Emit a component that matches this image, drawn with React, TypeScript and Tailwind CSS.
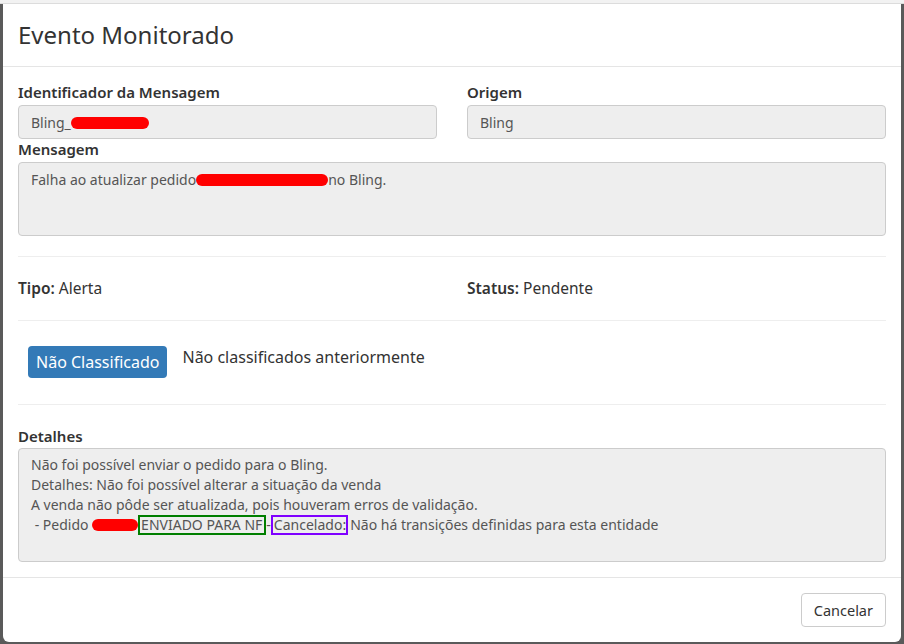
export default function App() {
  return (
    <div
      className="w-[904px] h-[644px] overflow-hidden bg-[#5a5a5a] flex flex-col text-[#333] text-[14px] leading-5"
      style={{ fontFamily: '"Noto Sans", "Open Sans", sans-serif' }}
    >
      <div className="h-[4px] shrink-0 bg-[#f2f2f2] border-b border-[#dcdcdc]" />
      <div className="flex-1 flex pl-[3px] pr-[3px] pb-[2px]">
        <div className="flex-1 bg-white rounded-b-[6px] flex flex-col">
          {/* header */}
          <div className="px-[15px] pt-[14px] pb-[14px] border-b border-[#e5e5e5]">
            <h4 className="text-[24px] leading-[34px] font-normal">Evento Monitorado</h4>
          </div>

          {/* body */}
          <div className="px-[15px] pt-[15px] pb-[15px]">
            <div className="grid grid-cols-2 gap-x-[30px]">
              <div>
                <label className="block font-semibold text-[15px] mb-[3px]">Identificador da Mensagem</label>
                <div className="h-[34px] bg-[#eee] border border-[#ccc] rounded-[4px] px-3 pt-px flex items-center text-[#555]">
                  Bling_
                  <span className="inline-block w-[78px] h-[12px] bg-[#ff0000] rounded-full" />
                </div>
              </div>
              <div>
                <label className="block font-semibold text-[15px] mb-[3px]">Origem</label>
                <div className="h-[34px] bg-[#eee] border border-[#ccc] rounded-[4px] px-3 pt-px flex items-center text-[#555]">
                  Bling
                </div>
              </div>
            </div>

            <label className="block font-semibold text-[15px] mb-[3px]">Mensagem</label>
            <div className="h-[74px] bg-[#eee] border border-[#ccc] rounded-[4px] px-3 py-[7px] text-[#555]">
              Falha ao atualizar pedido
              <span className="inline-block w-[132px] h-[12px] bg-[#ff0000] rounded-full align-[-1px]" />
              no Bling.
            </div>

            <hr className="mt-[20px] mb-[20px] border-t border-[#eee]" />

            <div className="grid grid-cols-2 gap-x-[30px] h-[22px] items-center">
              <div className="text-[15.5px]">
                <b className="font-semibold">Tipo:</b> Alerta
              </div>
              <div className="text-[15.5px]">
                <b className="font-semibold">Status:</b> Pendente
              </div>
            </div>

            <hr className="mt-[21px] mb-[25px] border-t border-[#eee]" />

            <div className="flex items-start pl-[10px]">
              <button className="h-[32px] px-[8px] bg-[#337ab7] text-white text-[16px] rounded-[4px]">
                Não Classificado
              </button>
              <span className="ml-[15px] text-[16px] leading-[22px]">Não classificados anteriormente</span>
            </div>

            <hr className="mt-[26px] mb-[21px] border-t border-[#eee]" />

            <label className="block font-semibold text-[15px] mb-[2px]">Detalhes</label>
            <div className="h-[114px] bg-[#eee] border border-[#ccc] rounded-[4px] px-3 py-[6px] text-[#555]">
              <div>Não foi possível enviar o pedido para o Bling.</div>
              <div>Detalhes: Não foi possível alterar a situação da venda</div>
              <div>A venda não pôde ser atualizada, pois houveram erros de validação.</div>
              <div className="whitespace-pre">
                {' - Pedido '}
                <span className="inline-block w-[46px] h-[12px] bg-[#ff0000] rounded-full align-[-1px]" />
                <span className="inline-block border-2 border-[#007f00] leading-4 pl-[1px] pr-[2px]">ENVIADO PARA NF</span>
                <span>-</span>
                <span className="inline-block border-2 border-[#7f00ff] leading-4 pl-[1px]">Cancelado:</span>
                <span className="ml-[2px]">Não há transições definidas para esta entidade</span>
              </div>
            </div>
          </div>

          {/* footer */}
          <div className="border-t border-[#e5e5e5] px-[15px] pt-[15px] flex justify-end">
            <button className="h-[34px] px-3 bg-white border border-[#ccc] rounded-[4px] text-[#333] text-[14.5px]">
              Cancelar
            </button>
          </div>
        </div>
      </div>
    </div>
  )
}
